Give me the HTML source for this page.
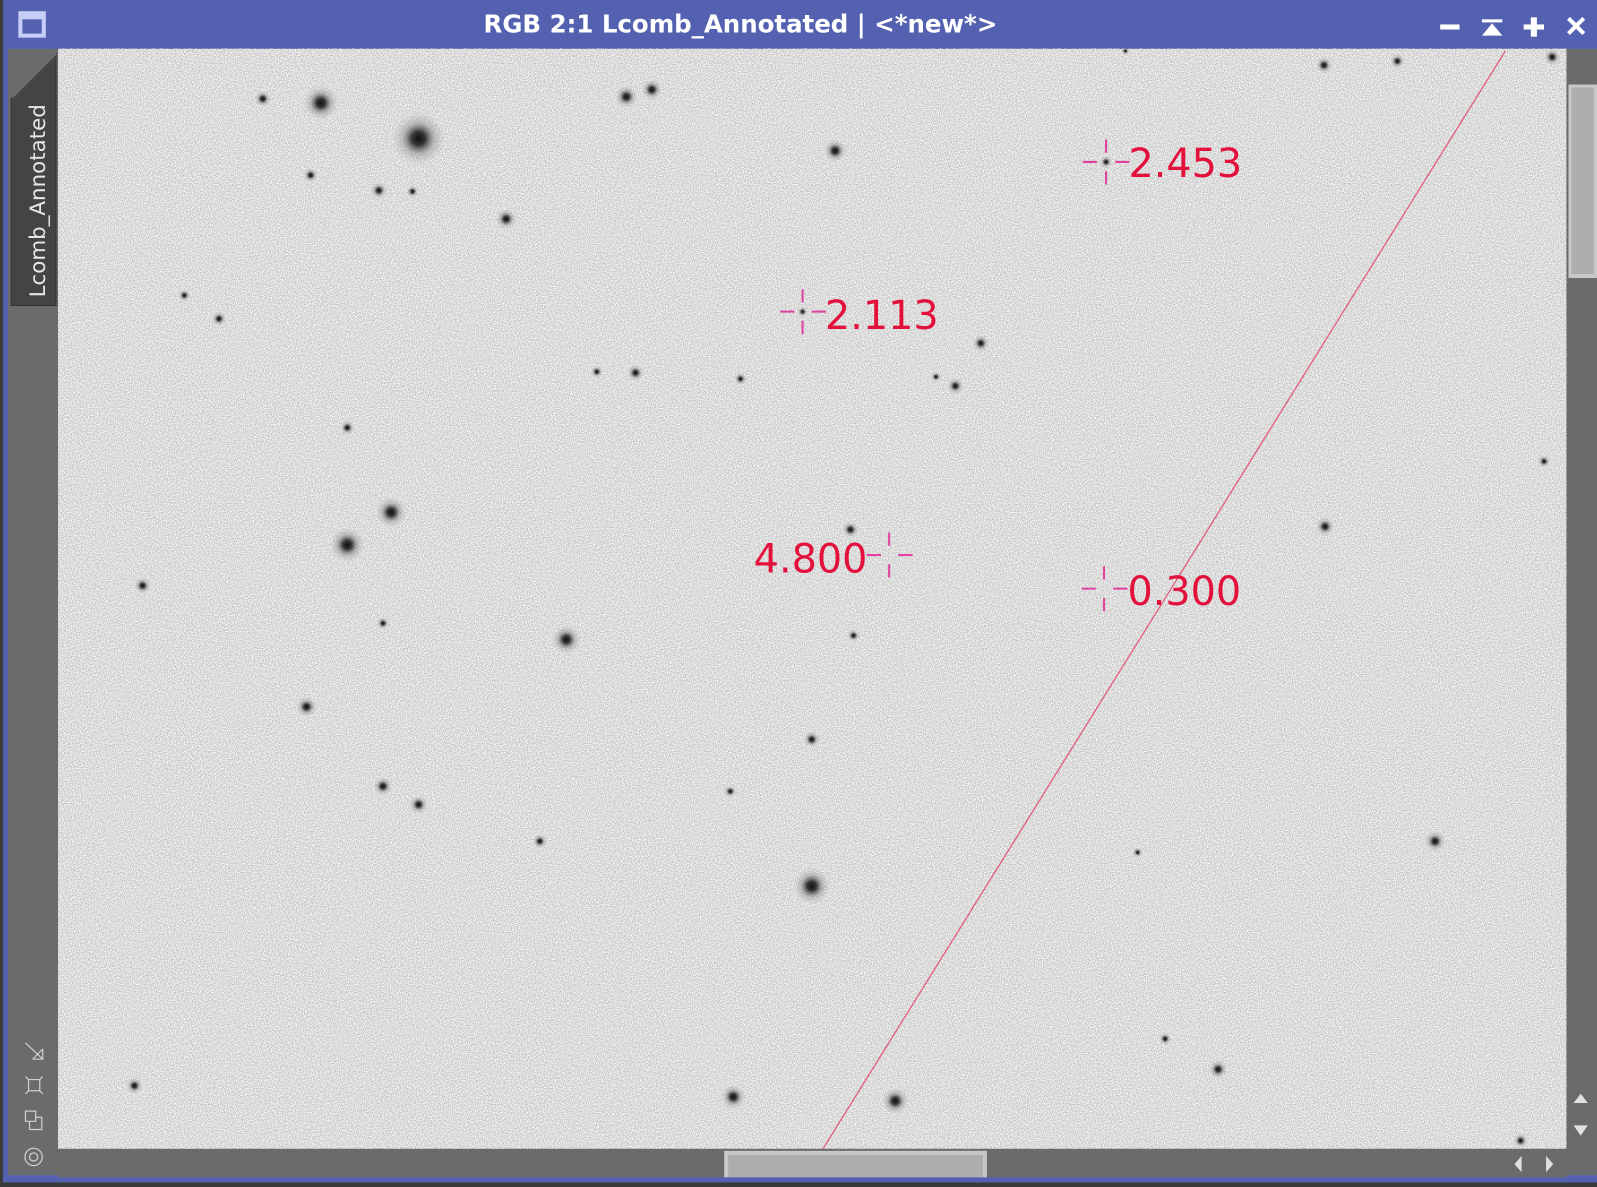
<!DOCTYPE html>
<html><head><meta charset="utf-8"><style>
html,body{margin:0;padding:0;width:1597px;height:1187px;overflow:hidden;background:#3a3a3a}
svg{display:block}
</style></head><body>
<svg width="1597" height="1187" viewBox="0 0 1568 1165.5" preserveAspectRatio="none" xmlns="http://www.w3.org/2000/svg">
<defs>
<filter id="n" x="0" y="0" width="100%" height="100%">
<feTurbulence type="fractalNoise" baseFrequency="0.9" numOctaves="1" seed="3"/>
<feColorMatrix type="matrix" values="0 0 0 0 1  0 0 0 0 1  0 0 0 0 1  0 0 0 2.6 -0.9"/>
</filter>
<radialGradient id="s"><stop offset="0" stop-color="#111"/><stop offset="0.25" stop-color="#222" stop-opacity="0.9"/><stop offset="0.6" stop-color="#777" stop-opacity="0.35"/><stop offset="1" stop-color="#999" stop-opacity="0"/></radialGradient>
</defs>
<rect x="0" y="0" width="1568" height="1166" fill="#3a3a3a"/>
<rect x="3" y="0" width="1565" height="1160" fill="#5461b0"/>
<rect x="8" y="48" width="1560" height="1106" fill="#6b6b6b"/>
<rect x="57" y="48" width="1481" height="1080" fill="#c4c4c4"/>
<rect x="57" y="48" width="1481" height="1080" fill="#fff" filter="url(#n)"/>
<g fill="url(#s)">
<circle cx="315" cy="101" r="17"/><circle cx="411" cy="136" r="26"/><circle cx="305" cy="172" r="7"/><circle cx="372" cy="187" r="8"/><circle cx="405" cy="188" r="6"/><circle cx="497" cy="215" r="10"/><circle cx="615" cy="95" r="11"/><circle cx="640" cy="88" r="10"/><circle cx="820" cy="148" r="11"/><circle cx="181" cy="290" r="6"/><circle cx="215" cy="313" r="7"/><circle cx="963" cy="337" r="8"/><circle cx="938" cy="379" r="8"/><circle cx="624" cy="366" r="8"/><circle cx="586" cy="365" r="6"/><circle cx="727" cy="372" r="6"/><circle cx="341" cy="420" r="7"/><circle cx="384" cy="503" r="15"/><circle cx="341" cy="535" r="17"/><circle cx="140" cy="575" r="8"/><circle cx="376" cy="612" r="6"/><circle cx="556" cy="628" r="14"/><circle cx="838" cy="624" r="6"/><circle cx="835" cy="520" r="8"/><circle cx="301" cy="694" r="10"/><circle cx="797" cy="726" r="8"/><circle cx="376" cy="772" r="9"/><circle cx="411" cy="790" r="9"/><circle cx="717" cy="777" r="6"/><circle cx="530" cy="826" r="7"/><circle cx="797" cy="870" r="18"/><circle cx="1301" cy="517" r="9"/><circle cx="1409" cy="826" r="10"/><circle cx="1196" cy="1050" r="9"/><circle cx="1144" cy="1020" r="6"/><circle cx="720" cy="1077" r="12"/><circle cx="879" cy="1081" r="13"/><circle cx="132" cy="1066" r="8"/><circle cx="1300" cy="64" r="8"/><circle cx="1372" cy="60" r="7"/><circle cx="1524" cy="56" r="8"/><circle cx="1105" cy="50" r="4"/><circle cx="258" cy="97" r="8"/><circle cx="1516" cy="453" r="6"/><circle cx="1117" cy="837" r="5"/><circle cx="919" cy="370" r="5"/><circle cx="1086" cy="159" r="6"/><circle cx="788" cy="306" r="5"/><circle cx="1493" cy="1120" r="7"/>
</g>
<line x1="808" y1="1128" x2="1478" y2="50" stroke="#e0607a" stroke-width="1.3"/>
<g stroke="#e040a0" stroke-width="2">
<path d="M1063 159h14M1095 159h14M1086 137v13M1086 168v13"/>
<path d="M766 306h14M797 306h14M788 284v13M788 315v13"/>
<path d="M851 545h14M882 545h14M873 523v13M873 554v13"/>
<path d="M1062 578h14M1093 578h14M1084 556v13M1084 587v13"/>
</g>
<g fill="#e3103c" font-family="'DejaVu Sans','Liberation Sans',sans-serif" font-size="39">
<text x="1108" y="174">2.453</text>
<text x="810" y="323">2.113</text>
<text x="740" y="562">4.800</text>
<text x="1107" y="594">0.300</text>
</g>
<rect x="18" y="11" width="27" height="26" fill="#c6cdf6"/>
<rect x="22" y="19" width="19" height="14" fill="#5461b0"/>
<text x="727" y="32" text-anchor="middle" fill="#fff" font-family="'DejaVu Sans','Liberation Sans',sans-serif" font-weight="bold" font-size="24">RGB 2:1 Lcomb_Annotated | &lt;*new*&gt;</text>
<g fill="#fff">
<rect x="1414" y="24" width="19" height="5"/>
<rect x="1455" y="19" width="20" height="3"/><path d="M1465 23l10 12h-20z"/>
<rect x="1496" y="24" width="20" height="5"/><rect x="1503" y="17" width="6" height="19"/>
</g>
<path d="M1540 18l15 15M1555 18l-15 15" stroke="#fff" stroke-width="4"/>
<path d="M11 97L55 53V300H11Z" fill="#444" stroke="#333" stroke-width="1"/>
<path d="M12 97L55 54V48H12Z" fill="#6b6b6b"/>
<text transform="translate(44,292) rotate(-90)" fill="#e6e6e6" font-family="'DejaVu Sans','Liberation Sans',sans-serif" font-size="21">Lcomb_Annotated</text>
<g stroke="#d0d0d0" stroke-width="1.2" fill="none">
<path d="M25 1024l17 16M42 1030v10H32M42 1030l-10 10"/>
<path d="M28 1060h11v11H28zM25 1057l3 3M42 1057l-3 3M25 1074l3-3M42 1074l-3-3"/>
<path d="M25 1091h10v10H25zM29 1101v8h12V1097h-6"/>
<circle cx="33" cy="1136" r="8.5"/><circle cx="33" cy="1136" r="4"/>
</g>
<rect x="1538" y="48" width="30" height="1080" fill="#6b6b6b"/>
<rect x="1540" y="83" width="28" height="190" fill="#c8c8c8"/>
<rect x="1543" y="86" width="22" height="183" fill="#adadad"/>
<path d="M1545 1083l7-9 7 9zM1545 1105l7 10 7-10z" fill="#e0e0e0"/>
<rect x="57" y="1128" width="1481" height="32" fill="#6b6b6b"/>
<rect x="711" y="1130" width="258" height="30" fill="#c8c8c8"/>
<rect x="715" y="1134" width="250" height="22" fill="#adadad"/>
<path d="M1494 1135l-7 8 7 8zM1518 1135l7 8-7 8z" fill="#e0e0e0"/>
<rect x="3" y="1156" width="1565" height="5" fill="#5461b0"/>
</svg>
</body></html>
